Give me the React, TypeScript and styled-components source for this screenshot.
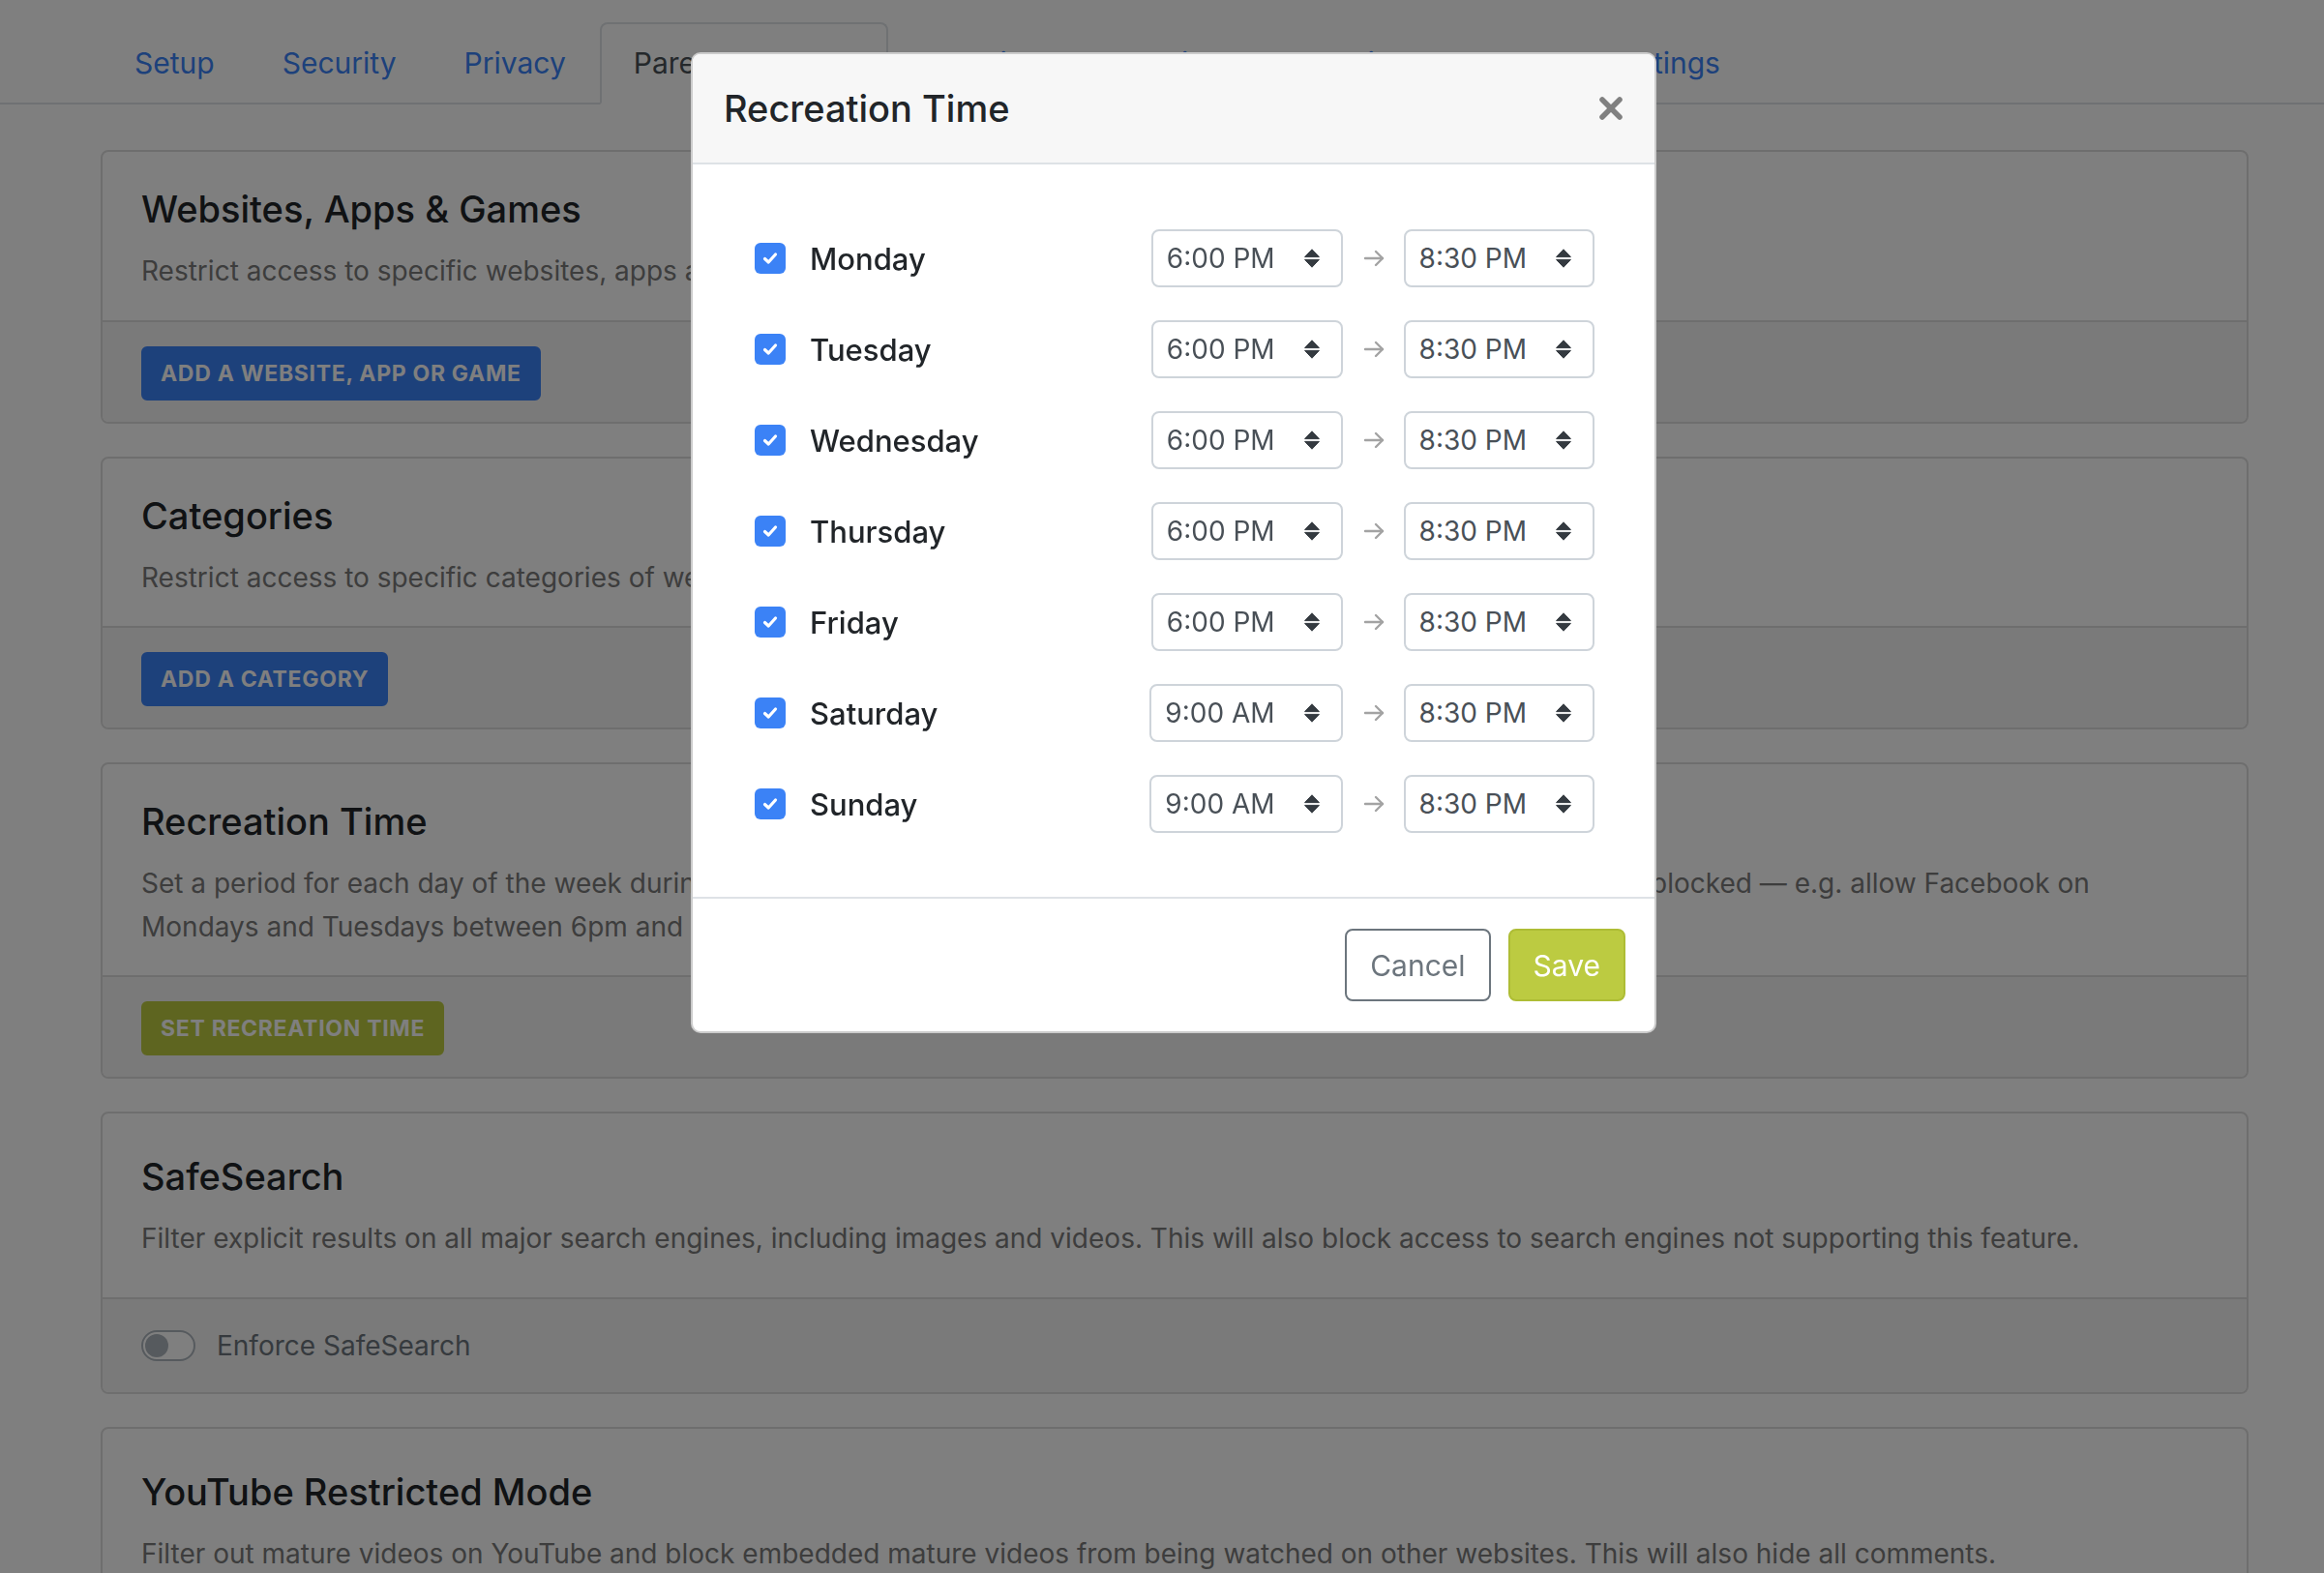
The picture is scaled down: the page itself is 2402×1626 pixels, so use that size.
import React from 'react'
import styled, { createGlobalStyle } from 'styled-components'

const GlobalStyle = createGlobalStyle`
  html, body {
    margin: 0;
    padding: 0;
    background: #fff;
    overflow: hidden;
  }
  body {
    font-family: Inter, "Noto Sans", "Liberation Sans", sans-serif;
    color: #212529;
  }
  * { box-sizing: border-box; }
`

const BLUE = '#3b82f6'
const GREEN = '#bccb41'

// ---------- page behind the modal ----------

const Page = styled.div`
  width: 2402px;
  height: 1626px;
  overflow: hidden;
  padding-top: 23px;
`

// the tab line runs across the whole window, the tabs start at the content edge
const TabBar = styled.nav`
  display: flex;
  padding-left: 104px;
  border-bottom: 2px solid #dee2e6;
`

const Tab = styled.a<{ $active?: boolean }>`
  display: block;
  padding: 18px 33px;
  margin-bottom: -2px;
  font-size: 30px;
  line-height: 45px;
  white-space: nowrap;
  color: ${p => (p.$active ? '#495057' : BLUE)};
  background: ${p => (p.$active ? '#fff' : 'transparent')};
  border: 2px solid ${p => (p.$active ? '#dee2e6' : 'transparent')};
  border-bottom-color: ${p => (p.$active ? '#fff' : 'transparent')};
  border-radius: 8px 8px 0 0;
`

const Cards = styled.div`
  display: flex;
  flex-direction: column;
  gap: 34px;
  margin: 47px 78px 0 104px;
`

const Card = styled.section`
  border: 2px solid #dcdcdc;
  border-radius: 8px;
  overflow: hidden;
  background: #fff;
`

const CardBody = styled.div<{ $roomy?: boolean }>`
  padding: ${p => (p.$roomy ? '41px 40px 38px' : '35px 40px 28px')};
  border-bottom: 2px solid #dcdcdc;
`

const CardTitle = styled.h5`
  margin: 0 0 18px;
  font-size: 38px;
  line-height: 48px;
  font-weight: 500;
  color: #212529;
`

const CardText = styled.p`
  margin: 0;
  font-size: 28px;
  line-height: 44.5px;
  color: #7a7a7a;
`

const CardFooter = styled.div<{ $tall?: boolean }>`
  display: flex;
  align-items: center;
  background: #f5f5f5;
  padding: ${p => (p.$tall ? '24px 40px' : '25px 40px 22px')};
`

const ActionButton = styled.button<{ $color: string }>`
  height: 56px;
  padding: 0 18px;
  border: 2px solid ${p => p.$color};
  border-radius: 6px;
  background: ${p => p.$color};
  color: #fff;
  font-family: Inter, "Liberation Sans", sans-serif;
  font-size: 23px;
  font-weight: 700;
  letter-spacing: 0.7px;
  text-transform: uppercase;
`

const SwitchRow = styled.label`
  display: flex;
  align-items: center;
  gap: 22px;
  height: 48px;
  font-size: 28px;
  color: #6c757d;
`

const SwitchTrack = styled.span`
  position: relative;
  width: 56px;
  height: 32px;
  border: 2px solid #adb5bd;
  border-radius: 16px;
  background: #fff;

  &::after {
    content: '';
    position: absolute;
    top: 2px;
    left: 2px;
    width: 24px;
    height: 24px;
    border-radius: 50%;
    background: #adb5bd;
  }
`

// ---------- modal ----------

const Backdrop = styled.div`
  position: fixed;
  inset: 0;
  background: rgba(0, 0, 0, 0.5);
`

const Dialog = styled.div`
  position: fixed;
  top: 54px;
  left: 714px;
  width: 998px;
  background: #fff;
  border: 2px solid rgba(0, 0, 0, 0.2);
  border-radius: 10px;
  overflow: hidden;
`

const DialogHeader = styled.div`
  display: flex;
  align-items: center;
  justify-content: space-between;
  padding: 32px;
  background: #f7f7f7;
  border-bottom: 2px solid #dee2e6;
`

const DialogTitle = styled.h5`
  margin: 0;
  font-size: 38px;
  line-height: 48px;
  font-weight: 500;
  color: #212529;
`

const CloseButton = styled.button`
  display: flex;
  padding: 0;
  border: 0;
  background: none;
`

const DialogBody = styled.div`
  display: flex;
  flex-direction: column;
  gap: 34px;
  padding: 67px 62px 66px 64px;
`

const DayRow = styled.div`
  display: flex;
  align-items: center;
  height: 60px;
`

const Check = styled.span`
  display: flex;
  align-items: center;
  justify-content: center;
  width: 32px;
  height: 32px;
  border-radius: 6px;
  background: ${BLUE};
`

const DayName = styled.span`
  margin-left: 25px;
  font-size: 31px;
  font-weight: 500;
  color: #212529;
`

const Range = styled.div`
  display: flex;
  align-items: center;
  margin-left: auto;
`

const TimeSelect = styled.div`
  display: flex;
  align-items: center;
  gap: 30px;
  height: 60px;
  padding: 0 22px 0 14px;
  border: 2px solid #ced4da;
  border-radius: 8px;
  background: #fff;
  font-size: 28px;
  color: #495057;
`

const Arrow = styled.span`
  display: flex;
  margin: 0 19px 0 21px;
`

const DialogFooter = styled.div`
  display: flex;
  justify-content: flex-end;
  gap: 18px;
  padding: 31px 30px;
  border-top: 2px solid #dee2e6;
`

const FooterButton = styled.button<{ $primary?: boolean }>`
  height: 75px;
  padding: 0 24px;
  border-radius: 8px;
  font-family: Inter, "Liberation Sans", sans-serif;
  font-size: 30px;
  border: 2px solid ${p => (p.$primary ? '#aebd35' : '#6c757d')};
  background: ${p => (p.$primary ? GREEN : '#fff')};
  color: ${p => (p.$primary ? '#fff' : '#6c757d')};
`

// ---------- icons ----------

const SortIcon = () => (
  <svg width="16" height="20" viewBox="0 0 16 20">
    <path d="M8 0.8 L15.4 8.6 H0.6 Z" fill="#343a40" stroke="#343a40" strokeWidth="1" strokeLinejoin="round" />
    <path d="M0.6 11.4 H15.4 L8 19.2 Z" fill="#343a40" stroke="#343a40" strokeWidth="1" strokeLinejoin="round" />
  </svg>
)

const ArrowIcon = () => (
  <svg width="23" height="24" viewBox="0 0 23 24" fill="none" stroke="#a3a3a3" strokeWidth="2.4" strokeLinecap="round" strokeLinejoin="round">
    <path d="M2 12 H20" />
    <path d="M13 5 L20 12 L13 19" />
  </svg>
)

const CheckIcon = () => (
  <svg width="18" height="18" viewBox="0 0 18 18" fill="none" stroke="#fff" strokeWidth="3.2" strokeLinecap="round" strokeLinejoin="round">
    <path d="M3.5 9.5 L7.3 13 L14.5 5" />
  </svg>
)

const CloseIcon = () => (
  <svg width="26" height="26" viewBox="0 0 26 26" fill="none" stroke="#808080" strokeWidth="5.5" strokeLinecap="round">
    <path d="M4 4 L22 22" />
    <path d="M22 4 L4 22" />
  </svg>
)

// ---------- data ----------

const tabs = ['Setup', 'Security', 'Privacy', 'Parental Control', 'Denylist', 'Allowlist', 'Analytics', 'Logs', 'Settings']

const schedule: [string, string, string][] = [
  ['Monday', '6:00 PM', '8:30 PM'],
  ['Tuesday', '6:00 PM', '8:30 PM'],
  ['Wednesday', '6:00 PM', '8:30 PM'],
  ['Thursday', '6:00 PM', '8:30 PM'],
  ['Friday', '6:00 PM', '8:30 PM'],
  ['Saturday', '9:00 AM', '8:30 PM'],
  ['Sunday', '9:00 AM', '8:30 PM'],
]

function TimeField({ value }: { value: string }) {
  return (
    <TimeSelect>
      <span>{value}</span>
      <SortIcon />
    </TimeSelect>
  )
}

export default function App() {
  return (
    <>
      <GlobalStyle />
      <Page>
        <TabBar>
          {tabs.map(t => (
            <Tab key={t} $active={t === 'Parental Control'}>{t}</Tab>
          ))}
        </TabBar>

        <Cards>
          <Card>
            <CardBody>
              <CardTitle>Websites, Apps &amp; Games</CardTitle>
              <CardText>Restrict access to specific websites, apps and games.</CardText>
            </CardBody>
            <CardFooter>
              <ActionButton $color={BLUE}>Add a website, app or game</ActionButton>
            </CardFooter>
          </Card>

          <Card>
            <CardBody>
              <CardTitle>Categories</CardTitle>
              <CardText>Restrict access to specific categories of websites and apps.</CardText>
            </CardBody>
            <CardFooter>
              <ActionButton $color={BLUE}>Add a category</ActionButton>
            </CardFooter>
          </Card>

          <Card>
            <CardBody>
              <CardTitle>Recreation Time</CardTitle>
              <CardText>
                Set a period for each day of the week during which the websites, apps, games and categories listed above will not be blocked — e.g. allow Facebook on
                <br />
                Mondays and Tuesdays between 6pm and 8:30pm.
              </CardText>
            </CardBody>
            <CardFooter>
              <ActionButton $color={GREEN}>Set recreation time</ActionButton>
            </CardFooter>
          </Card>

          <Card>
            <CardBody $roomy>
              <CardTitle>SafeSearch</CardTitle>
              <CardText>Filter explicit results on all major search engines, including images and videos. This will also block access to search engines not supporting this feature.</CardText>
            </CardBody>
            <CardFooter $tall>
              <SwitchRow>
                <SwitchTrack />
                Enforce SafeSearch
              </SwitchRow>
            </CardFooter>
          </Card>

          <Card>
            <CardBody $roomy>
              <CardTitle>YouTube Restricted Mode</CardTitle>
              <CardText>Filter out mature videos on YouTube and block embedded mature videos from being watched on other websites. This will also hide all comments.</CardText>
            </CardBody>
            <CardFooter $tall>
              <SwitchRow>
                <SwitchTrack />
                Enforce YouTube Restricted Mode
              </SwitchRow>
            </CardFooter>
          </Card>
        </Cards>
      </Page>

      <Backdrop />
      <Dialog>
        <DialogHeader>
          <DialogTitle>Recreation Time</DialogTitle>
          <CloseButton aria-label="Close">
            <CloseIcon />
          </CloseButton>
        </DialogHeader>
        <DialogBody>
          {schedule.map(([day, from, to]) => (
            <DayRow key={day}>
              <Check>
                <CheckIcon />
              </Check>
              <DayName>{day}</DayName>
              <Range>
                <TimeField value={from} />
                <Arrow>
                  <ArrowIcon />
                </Arrow>
                <TimeField value={to} />
              </Range>
            </DayRow>
          ))}
        </DialogBody>
        <DialogFooter>
          <FooterButton>Cancel</FooterButton>
          <FooterButton $primary>Save</FooterButton>
        </DialogFooter>
      </Dialog>
    </>
  )
}
